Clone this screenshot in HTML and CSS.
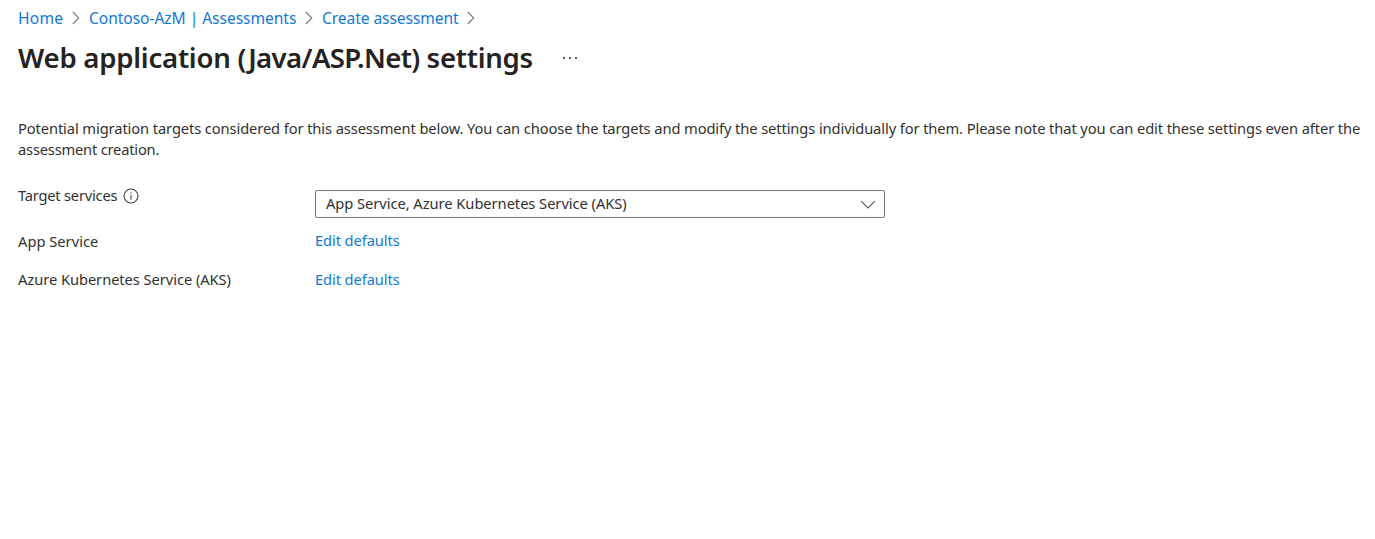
FILE: index.html
```html
<!DOCTYPE html>
<html lang="en">
<head>
<meta charset="utf-8">
<title>Web application settings</title>
<link rel="stylesheet" href="styles.css">
</head>
<body>
<nav class="crumbs">
  <a class="home">Home</a>
  <svg class="sep" viewBox="0 0 8 14"><path d="M.8 1l6 6-6 6"/></svg>
  <a class="project">Contoso-AzM | Assessments</a>
  <svg class="sep" viewBox="0 0 8 14"><path d="M.8 1l6 6-6 6"/></svg>
  <a class="create">Create assessment</a>
  <svg class="sep" viewBox="0 0 8 14"><path d="M.8 1l6 6-6 6"/></svg>
</nav>
<header class="head">
  <h1>Web application <span class="stack">(Java/ASP.Net)</span> settings</h1>
  <svg class="more" viewBox="0 0 14 2"><path d="M0 0h2v2H0zM6 0h2v2H6zM12 0h2v2h-2z"/></svg>
</header>
<p class="intro">Potential migration targets considered for this assessment below. You can choose the targets and modify the settings individually for them. Please note that you can edit these settings even after the<br><span class="intro-end">assessment creation.</span></p>
<main class="form">
  <div class="label target"><span class="target-text">Target services</span>
    <svg class="info" viewBox="0 0 16 16"><circle cx="8" cy="8" r="7"/><path d="M8 7v4.8M8 4.2v1.4"/></svg>
  </div>
  <div class="select"><span class="value">App Service, Azure Kubernetes Service (AKS)</span>
    <svg class="chev" viewBox="0 0 16 9"><path d="M1.2 1.2L8 8l6.800-6.800"/></svg>
  </div>
  <div class="label app">App Service</div>
  <a class="edit">Edit defaults</a>
  <div class="label aks">Azure Kubernetes Service (AKS)</div>
  <a class="edit">Edit defaults</a>
</main>
</body>
</html>
```
FILE: styles.css
```css
* { box-sizing: border-box; }
body { margin: 0; padding: 8px 0 0 18px; background: #fff; color: #323130; font: 14.7px/20px "Noto Sans", "Open Sans", sans-serif; white-space: nowrap; }
a { color: #1179d4; }
svg { display: block; fill: none; stroke: #605e5c; flex: none; }
.crumbs { display: flex; align-items: center; height: 20px; font-size: 15.6px; }
.home { width: 45px; letter-spacing: .2px; }
.project { width: 207px; letter-spacing: -.06px; }
.create { width: 136px; letter-spacing: -.09px; }
.sep { width: 8px; height: 14px; margin: 0 9px; stroke: #797775; stroke-width: 1.1; }
.head { display: flex; align-items: center; height: 40px; margin-top: 10px; }
h1 { margin: 0; width: 545px; font-size: 27.6px; line-height: 38px; padding-bottom: 2px; font-weight: 600; letter-spacing: -.25px; color: #242322; }
.stack { letter-spacing: -.65px; }
.more { width: 14px; height: 2px; fill: #605e5c; stroke: none; }
.intro { margin: 40px 0 0; line-height: 21px; letter-spacing: -.104px; }
.intro-end { letter-spacing: -.2px; }
.form { display: grid; grid-template-columns: 297px 570px; grid-template-rows: 40px 39px 20px; margin-top: 30px; }
.label { height: 20px; }
.target { display: flex; margin-top: -5px; }
.target-text { letter-spacing: -.22px; }
.info { width: 16px; height: 16px; margin: 3px 0 0 5.5px; stroke: #484644; stroke-width: 1.1; }
.select { display: flex; align-items: center; justify-content: space-between; height: 28px; border: 1px solid #7a7876; border-radius: 2px; padding: 0 8px 0 10px; }
.value { margin-top: -2px; letter-spacing: -.05px; }
.app { margin-top: 1px; }
.aks { letter-spacing: -.06px; }
.edit { letter-spacing: -.1px; }
.chev { width: 16px; height: 9px; stroke-width: 1.2; }
```
